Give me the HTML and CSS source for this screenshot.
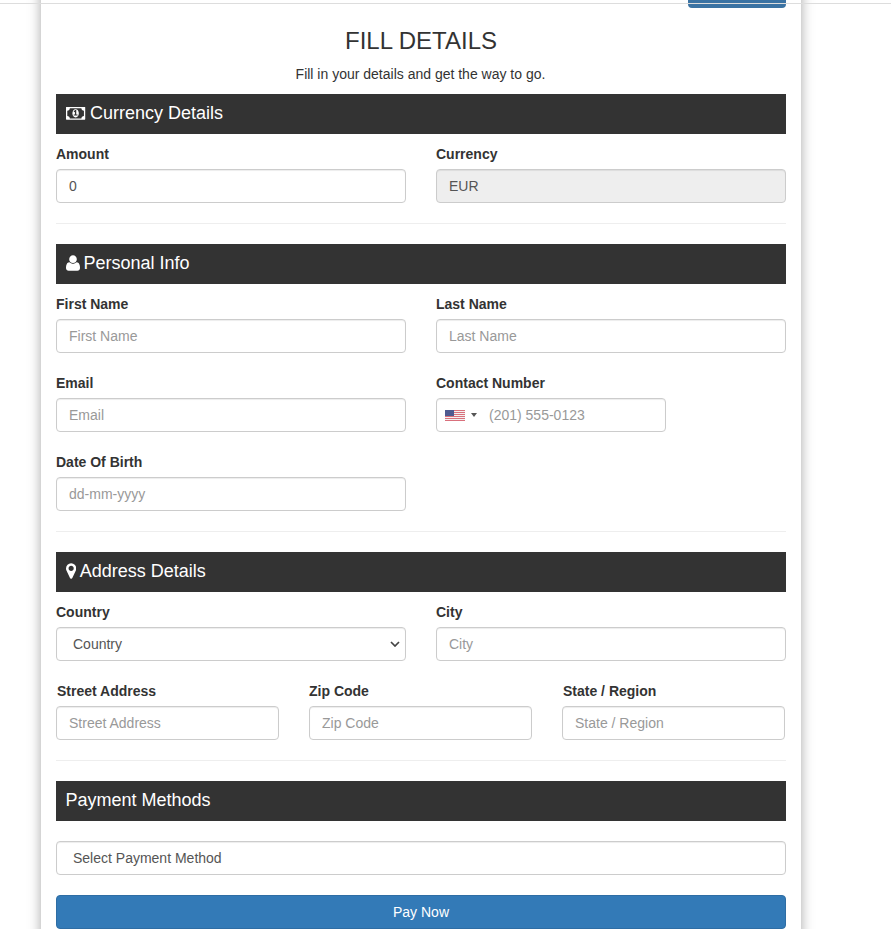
FILE: index.html
```html
<!DOCTYPE html>
<html lang="en">
<head>
<meta charset="utf-8">
<title>Fill Details</title>
<link rel="stylesheet" href="styles.css">
</head>
<body>
<div class="topline"></div>
<main class="card">
  <div class="stub-row"><div class="stub"></div></div>
  <h2 class="title">FILL DETAILS</h2>
  <p class="subtitle">Fill in your details and get the way to go.</p>
  <form>
    <section>
      <h3 class="bar">
        <svg class="icon icon-money" viewBox="0 0 2048 1792"><path d="M768 1152h384v-96h-128v-448h-114l-148 137 77 80q42-37 55-57h2v288h-128v96zm512-224q0 70-21 142t-59.5 134-101.5 101-138 39-138-39-101.5-101-59.5-134-21-142 21-142 59.5-134 101.5-101 138-39 138 39 101.5 101 59.5 134 21 142zm512 256v-512q-106 0-181-75t-75-181h-1152q0 106-75 181t-181 75v512q106 0 181 75t75 181h1152q0-106 75-181t181-75zm128-832v1152q0 26-19 45t-45 19h-1792q-26 0-45-19t-19-45v-1152q0-26 19-45t45-19h1792q26 0 45 19t19 45z"/></svg>
        Currency Details
      </h3>
      <div class="row two">
        <div class="group"><label>Amount</label><input class="control" type="text" value="0"></div>
        <div class="group"><label>Currency</label><input class="control" type="text" value="EUR" disabled></div>
      </div>
    </section>
    <hr>
    <section>
      <h3 class="bar">
        <svg class="icon icon-user" viewBox="192 0 1408 1792"><path d="M1600 1405q0 120-73 189.5t-194 69.5h-874q-121 0-194-69.5t-73-189.5q0-53 3.5-103.5t14-109 26.5-108.5 43-97.5 62-81 85.5-53.5 111.5-20q9 0 42 21.5t74.5 48 108 48 133.5 21.5 133.5-21.5 108-48 74.5-48 42-21.5q61 0 111.5 20t85.5 53.5 62 81 43 97.5 26.5 108.5 14 109 3.5 103.5zm-320-893q0 159-112.5 271.5t-271.5 112.5-271.5-112.5-112.5-271.5 112.5-271.5 271.5-112.5 271.5 112.5 112.5 271.5z"/></svg>
        Personal Info
      </h3>
      <div class="row two">
        <div class="group"><label>First Name</label><input class="control" type="text" placeholder="First Name"></div>
        <div class="group"><label>Last Name</label><input class="control" type="text" placeholder="Last Name"></div>
      </div>
      <div class="row two">
        <div class="group"><label>Email</label><input class="control" type="text" placeholder="Email"></div>
        <div class="group"><label>Contact Number</label>
          <div class="phone">
            <svg class="flag" viewBox="0 0 20 11" preserveAspectRatio="none">
              <rect width="20" height="11" fill="#f4f0f0"/>
              <rect width="20" height="1" fill="#d9707c"/>
              <rect y="2" width="20" height="1" fill="#d9707c"/>
              <rect y="4" width="20" height="1" fill="#d9707c"/>
              <rect y="6" width="20" height="1" fill="#d9707c"/>
              <rect y="8" width="20" height="1" fill="#d9707c"/>
              <rect y="10" width="20" height="1" fill="#d9707c"/>
              <rect width="9" height="6" fill="#4f5a90"/>
            </svg>
            <span class="caret"></span>
            <input class="phone-input" type="text" placeholder="(201) 555-0123">
          </div>
        </div>
      </div>
      <div class="row two">
        <div class="group"><label>Date Of Birth</label><input class="control" type="text" placeholder="dd-mm-yyyy"></div>
      </div>
    </section>
    <hr>
    <section>
      <h3 class="bar">
        <svg class="icon icon-marker" viewBox="384 0 1024 1792"><path d="M1152 640q0-106-75-181t-181-75-181 75-75 181 75 181 181 75 181-75 75-181zm256 0q0 109-33 179l-364 774q-16 33-47.5 52t-67.5 19-67.5-19-46.5-52l-365-774q-33-70-33-179 0-212 150-362t362-150 362 150 150 362z"/></svg>
        Address Details
      </h3>
      <div class="row two">
        <div class="group"><label>Country</label>
          <div class="select-wrap">
            <select class="control select"><option>Country</option></select>
            <svg class="chevron" viewBox="0 0 10 6"><path d="M1 1l4 4 4-4" fill="none" stroke="#444" stroke-width="1.7"/></svg>
          </div>
        </div>
        <div class="group"><label>City</label><input class="control" type="text" placeholder="City"></div>
      </div>
      <div class="row three">
        <div class="group"><label class="indent">Street Address</label><input class="control" type="text" placeholder="Street Address"></div>
        <div class="group"><label>Zip Code</label><input class="control" type="text" placeholder="Zip Code"></div>
        <div class="group"><label class="indent">State / Region</label><input class="control" type="text" placeholder="State / Region"></div>
      </div>
    </section>
    <hr>
    <section>
      <h3 class="bar bar-plain">Payment Methods</h3>
      <div class="group"><select class="control select"><option>Select Payment Method</option></select></div>
      <button class="pay" type="button">Pay Now</button>
    </section>
  </form>
</main>
</body>
</html>
```
FILE: styles.css
```css
* { box-sizing: border-box; }
html, body { height: 929px; margin: 0; overflow: hidden; background: #fff; }
body { font-family: "Liberation Sans", Arial, sans-serif; font-size: 14px; line-height: 20px; color: #333; }

.topline { height: 4px; border-bottom: 1px solid #ddd; position: relative; z-index: 1; }

.card {
  width: 760px;
  margin: -24px 0 0 41px;
  padding: 0 15px 40px;
  background: #fff;
  box-shadow: 0 0 12px rgba(0, 0, 0, .35);
}

.stub-row { display: flex; justify-content: flex-end; height: 28px; }
.stub { width: 98px; height: 28px; background: #3b73a3; border-radius: 4px; }

.title { margin: 20px 0 0; font-size: 24px; font-weight: 400; line-height: 26px; text-align: center; }
.subtitle { margin: 10px 0 10px; padding-right: 1px; text-align: center; }

.bar {
  display: flex;
  align-items: center;
  gap: 4px;
  height: 40px;
  margin: 0 0 10px;
  padding: 0 0 2px 9.5px;
  background: #333;
  color: #fff;
  font-size: 18px;
  font-weight: 400;
}
.bar-plain { margin-bottom: 20px; }

.icon { fill: #fff; height: 18px; flex: none; }
.icon-money { width: 20.5px; }
.icon-user { width: 14px; }
.icon-marker { width: 10.3px; }

.row { display: grid; gap: 30px; }
.two { grid-template-columns: 350px 350px; }
.three { grid-template-columns: repeat(3, 223px); }

.group { margin-bottom: 20px; }
.group label { display: block; margin-bottom: 5px; font-weight: 700; }
.group label.indent { padding-left: 1px; }

.control {
  display: block;
  width: 100%;
  height: 34px;
  padding: 6px 12px;
  border: 1px solid #ccc;
  border-radius: 4px;
  background: #fff;
  color: #555;
  font: inherit;
  box-shadow: inset 0 1px 1px rgba(0, 0, 0, .075);
}
.control:disabled { background: #eee; color: #555; }
::placeholder { color: #999; opacity: 1; }

.select { appearance: none; padding-left: 16px; }
.select-wrap { position: relative; }
.chevron { position: absolute; right: 6px; top: 14px; width: 10px; height: 6px; }

.phone {
  display: flex;
  align-items: center;
  width: 230px;
  height: 34px;
  padding-left: 8px;
  border: 1px solid #ccc;
  border-radius: 4px;
  box-shadow: inset 0 1px 1px rgba(0, 0, 0, .075);
}
.flag { width: 20px; height: 11px; flex: none; }
.caret { width: 0; height: 0; margin-left: 6px; border-left: 3px solid transparent; border-right: 3px solid transparent; border-top: 4px solid #555; }
.phone-input { flex: 1; min-width: 0; margin-left: 12px; padding: 0; border: 0; outline: 0; background: transparent; color: #555; font: inherit; }

hr { height: 1px; margin: 0 0 20px; border: 0; background: #eee; }

.pay {
  display: block;
  width: 100%;
  height: 34px;
  border: 1px solid #2e6da4;
  border-radius: 4px;
  background: #337ab7;
  color: #fff;
  font: inherit;
}
```
